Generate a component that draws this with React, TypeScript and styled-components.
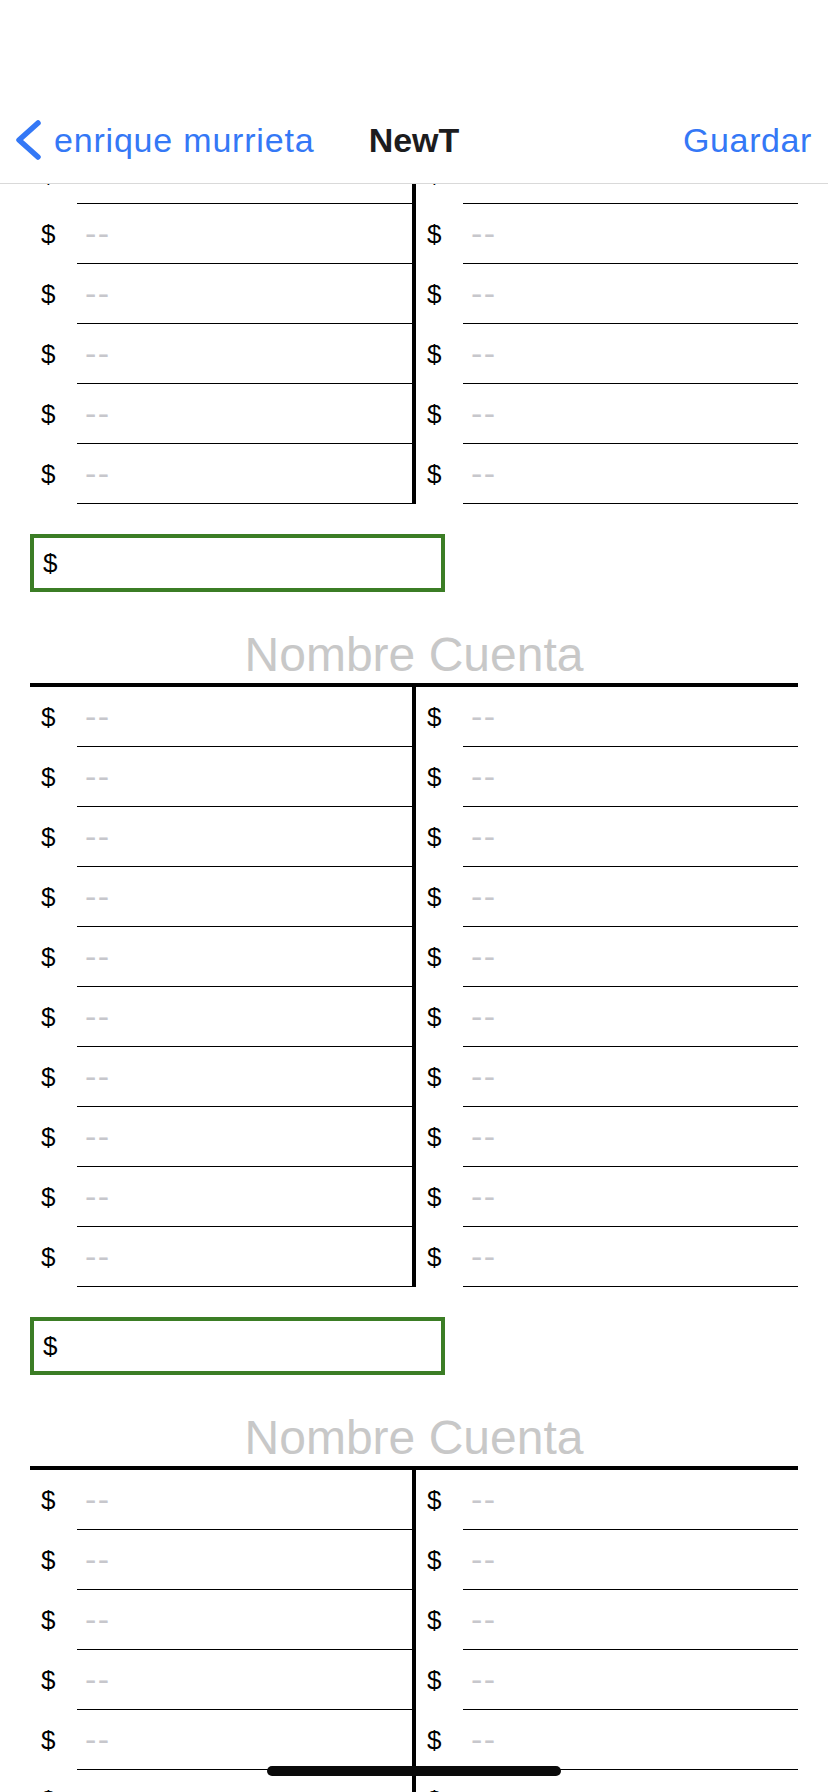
import React, { useLayoutEffect, useRef } from "react";
import styled, { createGlobalStyle } from "styled-components";

const GlobalStyle = createGlobalStyle`
  html, body {
    margin: 0;
    padding: 0;
    background: #ffffff;
    font-family: "Liberation Sans", Arial, sans-serif;
  }
  * { box-sizing: border-box; }
`;

const Screen = styled.div`
  position: relative;
  width: 828px;
  height: 1792px;
  display: flex;
  flex-direction: column;
  overflow: hidden;
  background: #fff;
`;

const NavBar = styled.header`
  flex-shrink: 0;
  height: 184px;
  padding-top: 97px;
  border-bottom: 1px solid #d9d9d9;
  display: grid;
  grid-template-columns: 1fr auto 1fr;
  align-items: center;
  font-size: 34px;
`;

const BackButton = styled.div`
  display: flex;
  align-items: center;
  gap: 12px;
  padding-left: 14px;
  color: #3478f6;
  white-space: nowrap;
  letter-spacing: 0.8px;
`;

const NavTitle = styled.div`
  font-weight: 700;
  color: #1c1c1e;
`;

const NavAction = styled.div`
  justify-self: end;
  padding-right: 16px;
  color: #3478f6;
  letter-spacing: 0.6px;
`;

const ScrollArea = styled.main`
  flex: 1;
  overflow-y: auto;
  scrollbar-width: none;
  &::-webkit-scrollbar { display: none; }
`;

const Content = styled.div`
  padding: 0 30px 40px;
`;

const Section = styled.section`
  display: flex;
  flex-direction: column;
`;

const AccountTitle = styled.div`
  margin-top: 34px;
  height: 57px;
  line-height: 57px;
  text-align: center;
  font-size: 48px;
  color: #c8c8c8;
`;

const TAccount = styled.div`
  border-top: 4px solid #000;
  display: grid;
  grid-template-columns: 1fr 4px 1fr;
`;

const Column = styled.div`
  display: flex;
  flex-direction: column;
`;

const Divider = styled.div`
  background: #000;
`;

const Row = styled.div`
  height: 60px;
  display: flex;
  align-items: center;
`;

const Currency = styled.span`
  width: 47px;
  flex-shrink: 0;
  padding-left: 11px;
  font-size: 26px;
  color: #000;
`;

const Field = styled.div`
  flex: 1;
  height: 100%;
  border-bottom: 1px solid #000;
  display: flex;
  align-items: center;
  padding-left: 8px;
  font-size: 34px;
  color: #c7c7cc;
  letter-spacing: 1.5px;
`;

const TotalBox = styled.div`
  margin-top: 30px;
  width: 415px;
  height: 58px;
  border: 4px solid #3b7d25;
  display: flex;
  align-items: center;
  padding-left: 9px;
  font-size: 26px;
  color: #000;
`;

const HomeIndicator = styled.div`
  position: absolute;
  left: 50%;
  bottom: 16px;
  width: 294px;
  height: 10px;
  margin-left: -147px;
  border-radius: 5px;
  background: #0a0a0a;
`;

const Chevron = () => (
  <svg width="28" height="44" viewBox="0 0 28 44" aria-hidden="true">
    <path
      d="M24 5 L5 22 L24 39"
      fill="none"
      stroke="#3478f6"
      strokeWidth="5.5"
      strokeLinecap="round"
      strokeLinejoin="round"
    />
  </svg>
);

const EntryColumn: React.FC<{ rows: number }> = ({ rows }) => (
  <Column>
    {Array.from({ length: rows }).map((_, i) => (
      <Row key={i}>
        <Currency>$</Currency>
        <Field>--</Field>
      </Row>
    ))}
  </Column>
);

const Account: React.FC<{ rows: number }> = ({ rows }) => (
  <Section>
    <AccountTitle>Nombre Cuenta</AccountTitle>
    <TAccount>
      <EntryColumn rows={rows} />
      <Divider />
      <EntryColumn rows={rows} />
    </TAccount>
    <TotalBox>$</TotalBox>
  </Section>
);

export default function App() {
  const scrollRef = useRef<HTMLElement>(null);
  useLayoutEffect(() => {
    if (scrollRef.current) scrollRef.current.scrollTop = 375;
  }, []);

  return (
    <>
      <GlobalStyle />
      <Screen>
        <NavBar>
          <BackButton>
            <Chevron />
            <span>enrique murrieta</span>
          </BackButton>
          <NavTitle>NewT</NavTitle>
          <NavAction>Guardar</NavAction>
        </NavBar>
        <ScrollArea ref={scrollRef}>
          <Content>
            <Account rows={10} />
            <Account rows={10} />
            <Account rows={10} />
          </Content>
        </ScrollArea>
        <HomeIndicator />
      </Screen>
    </>
  );
}
